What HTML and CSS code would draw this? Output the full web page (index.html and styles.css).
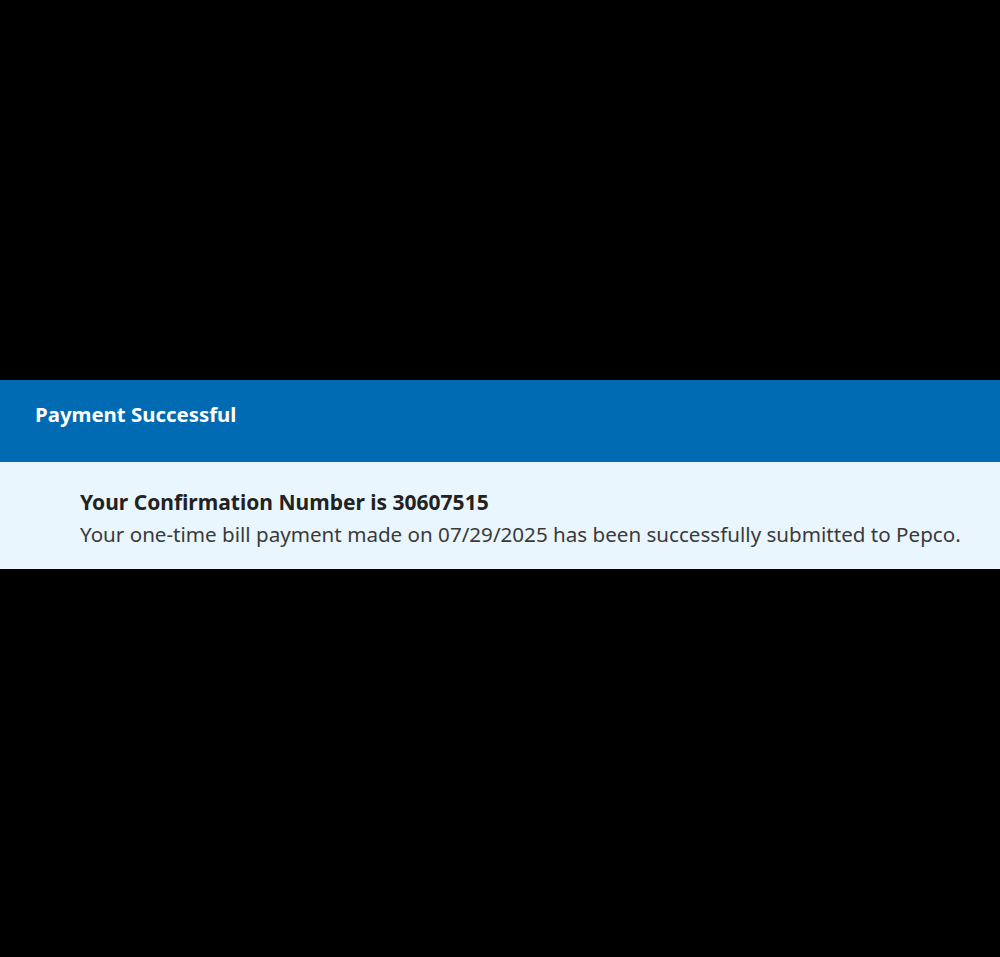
FILE: index.html
```html
<!DOCTYPE html>
<html lang="en">
<head>
<meta charset="utf-8">
<title>Payment Successful</title>
<link rel="stylesheet" href="styles.css">
</head>
<body>
<div class="page">
  <section class="notice">
    <header class="notice-head">
      <h1 class="notice-title">Payment Successful</h1>
    </header>
    <div class="notice-body">
      <h2 class="conf">Your Confirmation Number is 30607515</h2>
      <p class="desc">Your one-time bill payment made on 07/29/2025 has been successfully submitted to Pepco.</p>
    </div>
  </section>
</div>
</body>
</html>
```
FILE: styles.css
```css
html, body {
  margin: 0;
  padding: 0;
  background: #000;
  height: 100%;
}
.page {
  height: 957px;
  display: flex;
  flex-direction: column;
  padding-top: 380px;
  box-sizing: border-box;
  font-family: "Noto Sans", "Open Sans", sans-serif;
}
.notice-head {
  background: #006ab3;
  height: 82px;
  display: flex;
  align-items: center;
  padding: 0 0 14px 35px;
  box-sizing: border-box;
}
.notice-title {
  margin: 0;
  color: #fff;
  font-size: 20.4px;
  font-weight: 700;
  line-height: 1;
}
.notice-body {
  background: #eaf6fd;
  height: 107px;
  box-sizing: border-box;
  padding: 27px 0 0 80px;
}
.conf {
  margin: 0;
  font-size: 21px;
  font-weight: 700;
  color: #222;
  line-height: 26px;
}
.desc {
  margin: 6px 0 0;
  font-size: 20.6px;
  color: #3a3a3a;
  line-height: 26px;
}
```
